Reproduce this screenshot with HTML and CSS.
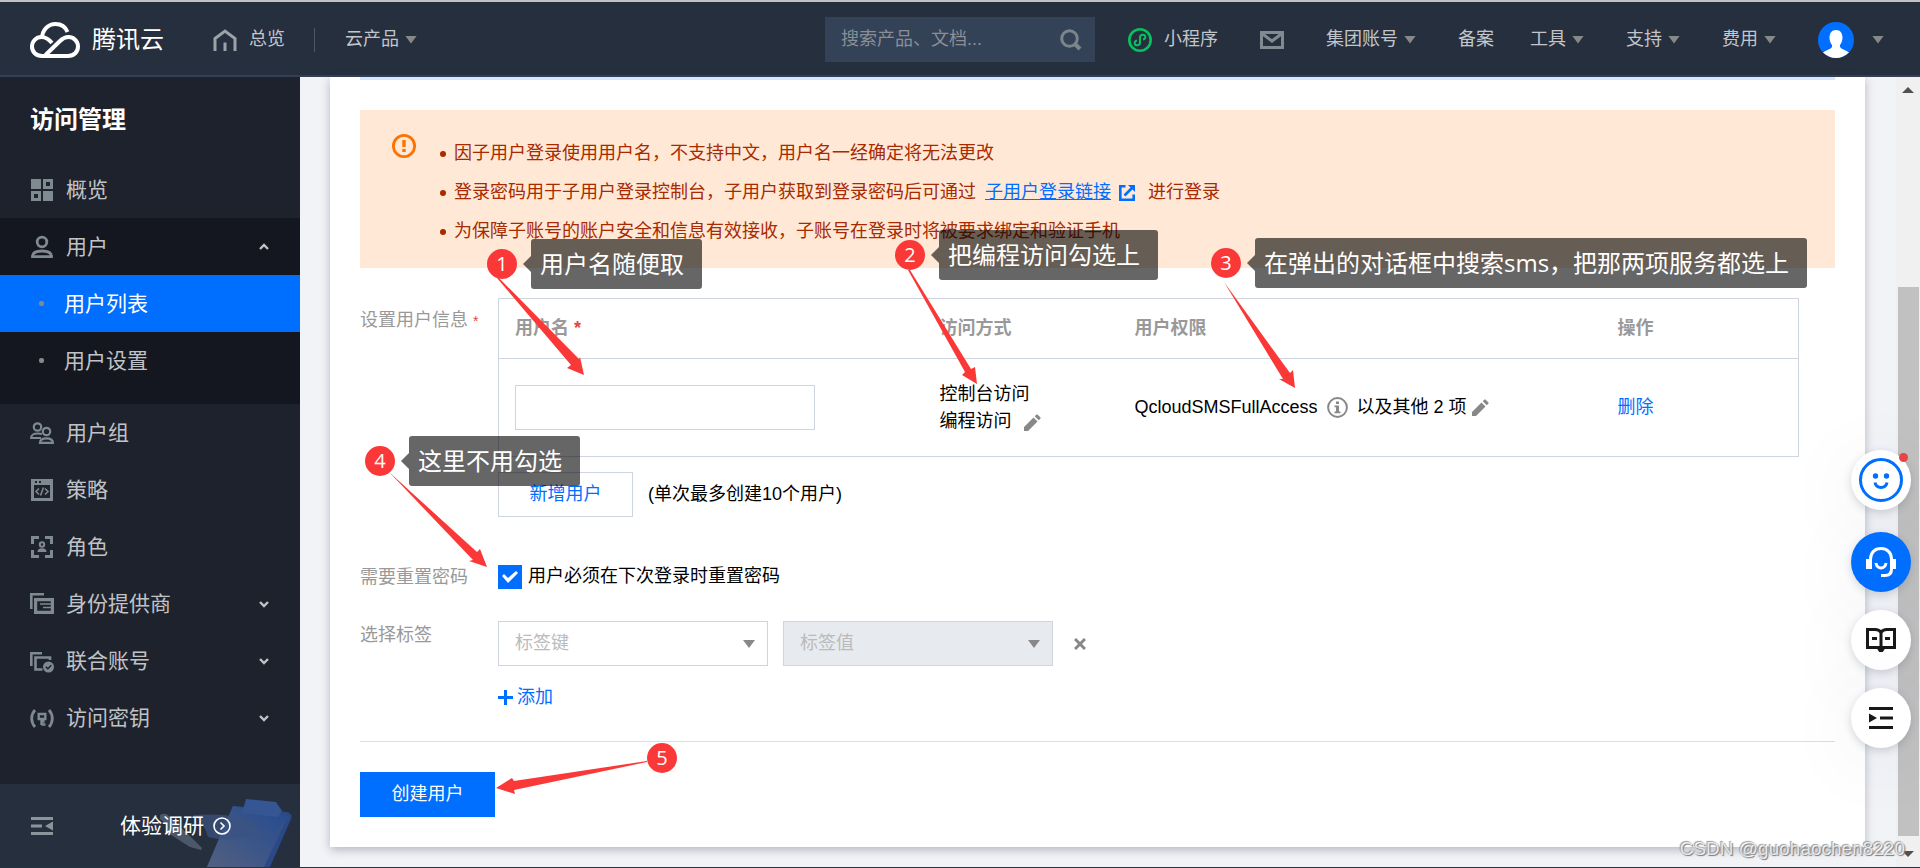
FILE: index.html
```html
<!DOCTYPE html>
<html lang="zh-CN">
<head>
<meta charset="utf-8">
<title>访问管理 - 腾讯云</title>
<link rel="stylesheet" href="styles.css">
</head>
<body>
<header class="topbar">
  <a class="brand" href="#">
    <svg width="50" height="36" viewBox="0 0 50 36" fill="none" stroke="#fff" stroke-width="4"><path d="M12 16.500C12 8 18 2 25.500 2C31 2 35.500 5 37.500 10"/><path d="M22 21C19 17.500 15.500 15 11.500 15C6 15 2 19.500 2 24.500C2 30 6 34 12 34H38C44 34 48 30 48 24.500C48 19 43.500 15 38.500 15C35 15 32.500 16.500 30 19L15.500 33"/></svg>
    <span>腾讯云</span>
  </a>
  <a class="navlink home" href="#">
    <svg width="24" height="22" viewBox="0 0 24 22" fill="none" stroke="#9aa3a8" stroke-width="3"><path d="M2 22V9.500L12 2L22 9.500V22M12 13.500V22"/></svg>
    <span>总览</span>
  </a>
  <span class="split"></span>
  <a class="navlink" href="#">云产品<i class="tri"></i></a>
  <form class="search">
    <input type="text" placeholder="搜索产品、文档..." aria-label="搜索">
    <button type="button" aria-label="搜索"><svg width="22" height="22" viewBox="0 0 22 22" fill="none" stroke="#7b868c" stroke-width="3"><circle cx="9.500" cy="9.500" r="7.800"/><path d="M15 15L20 20" stroke-width="4"/></svg></button>
  </form>
  <nav class="rightnav">
    <a class="navlink mini" href="#">
      <svg width="24" height="24" viewBox="0 0 24 24" fill="none" stroke="#07c160"><circle cx="12" cy="12" r="10.700" stroke-width="2.600"/><path d="M9 12.500C5.800 13 6 17.300 9.200 17.300C11 17.300 12 16 12 14.500V9.500C12 8 13 6.700 14.800 6.700C18 6.700 18.200 11 15 11.500" stroke-width="2"/></svg>
      <span>小程序</span>
    </a>
    <a class="navlink" href="#" aria-label="消息"><svg width="24" height="18" viewBox="0 0 24 18" fill="none" stroke="#7f8b91" stroke-width="3"><path d="M1.500 1.500H22.500V16.500H1.500ZM2 2.500L12 10L22 2.500"/></svg></a>
    <a class="navlink" href="#">集团账号<i class="tri"></i></a>
    <a class="navlink beian" href="#">备案</a>
    <a class="navlink" href="#">工具<i class="tri"></i></a>
    <a class="navlink" href="#">支持<i class="tri"></i></a>
    <a class="navlink" href="#">费用<i class="tri"></i></a>
    <a class="navlink avatar" href="#" aria-label="账号">
      <svg width="36" height="36" viewBox="0 0 36 36"><circle cx="18" cy="18" r="18" fill="#006eff"/><path d="M18 8C22.500 8 24.500 11.500 24.500 15.500C24.500 19 23.500 21 22 23C21.500 25.500 22.500 26 25 27.200C28 28.600 29.500 29.500 31 30.500C27.500 34 23 36 18 36C13 36 8.500 34 5 30.500C6.500 29.500 8 28.600 11 27.200C13.500 26 14.500 25.500 14 23C12.500 21 11.500 19 11.500 15.500C11.500 11.500 13.500 8 18 8Z" fill="#fff"/></svg>
      <i class="tri"></i>
    </a>
  </nav>
</header>

<div class="shell">
  <aside class="sidebar">
    <h2 class="side-title">访问管理</h2>
    <nav class="menu">
      <a class="item" href="#"><svg class="ico" viewBox="0 0 24 24" fill="#7f8990"><path fill-rule="evenodd" d="M1 1H11V11H1ZM13 1H23V11H13ZM16 4V8H20V4ZM1 13H11V23H1ZM4 16V20H8V16ZM13 13H23V23H13Z"/></svg><span>概览</span></a>
      <div class="group">
        <a class="item" href="#"><svg class="ico" viewBox="0 0 24 24" fill="none" stroke="#7f8990" stroke-width="2.800"><circle cx="12" cy="7" r="4.800"/><path d="M2.500 21.600C2.500 17.500 6 16 12 16C18 16 21.500 17.500 21.500 21.600Z"/></svg><span>用户</span><svg class="chev" viewBox="0 0 10 6"><path d="M1 5L5 1L9 5"/></svg></a>
        <a class="item sub active" href="#"><i class="dot"></i><span>用户列表</span></a>
        <a class="item sub" href="#"><i class="dot"></i><span>用户设置</span></a>
      </div>
      <a class="item" href="#"><svg class="ico" viewBox="0 0 24 24" fill="none" stroke="#7f8990" stroke-width="2.200"><circle cx="7.500" cy="6" r="3.700"/><path d="M11 17H1.200C1.200 13.500 3 12.500 8 12.500C10 12.500 11 12.700 12 13"/><circle cx="16.500" cy="10.500" r="3.700"/><path d="M10 21.900C10 18.500 12 17.300 16.500 17.300C21 17.300 22.900 18.500 22.900 21.900Z"/></svg><span>用户组</span></a>
      <a class="item" href="#"><svg class="ico" viewBox="0 0 24 24"><path fill="#7f8990" fill-rule="evenodd" d="M1 1H23V23H1ZM4 7V20H20V7ZM5 3V5H7V3ZM9 3V5H11V3Z"/><path d="M9 10.500L6 13.500L9 16.500M15 10.500L18 13.500L15 16.500M13.500 9.500L10.500 17.500" fill="none" stroke="#7f8990" stroke-width="1.600"/></svg><span>策略</span></a>
      <a class="item" href="#"><svg class="ico" viewBox="0 0 24 24" fill="none" stroke="#7f8990"><path stroke-width="3" d="M9 2.500H2.500V9M15 2.500H21.500V9M9 21.500H2.500V15M15 21.500H21.500V15"/><circle cx="12" cy="9.500" r="2.200" stroke-width="2"/><path fill="#7f8990" stroke="none" d="M7.500 17C7.500 14.500 9 13.300 12 13.300C15 13.300 16.500 14.500 16.500 17Z"/></svg><span>角色</span></a>
      <a class="item" href="#"><svg class="ico" viewBox="0 0 24 24" fill="none" stroke="#7f8990"><path stroke-width="2.600" d="M1.300 17V2.300H14"/><path stroke-width="3.200" d="M5.600 7.600H22.400V20.400H5.600Z"/><path stroke-width="1.600" d="M10 12H21M13 15.500H21"/></svg><span>身份提供商</span><svg class="chev" viewBox="0 0 10 6"><path d="M1 1L5 5L9 1"/></svg></a>
      <a class="item" href="#"><svg class="ico" viewBox="0 0 24 24" fill="none" stroke="#7f8990" stroke-width="2.600"><path d="M1.300 17V4.300H12"/><path d="M12.500 20.500H5.500V8.500H20V11"/><circle cx="18.500" cy="18" r="5.500" fill="#7f8990" stroke="none"/><path d="M15.800 17.800L17.800 19.800L21.300 16.300" stroke="#1e222d" stroke-width="1.500"/></svg><span>联合账号</span><svg class="chev" viewBox="0 0 10 6"><path d="M1 1L5 5L9 1"/></svg></a>
      <a class="item" href="#"><svg class="ico" viewBox="0 0 24 24" fill="none" stroke="#7f8990" stroke-width="2.800"><path d="M5 4C.6 9 .6 16 5 21M19 4C23.400 9 23.400 16 19 21"/><path d="M8.700 8H15.300V13H8.700ZM11.500 13V19M11.500 18.500H15.500M11.500 15.500H14.500" stroke-width="2.400"/></svg><span>访问密钥</span><svg class="chev" viewBox="0 0 10 6"><path d="M1 1L5 5L9 1"/></svg></a>
    </nav>
    <div class="side-foot">
      <svg class="art" width="133" height="69" viewBox="0 0 133 69">
        <defs><linearGradient id="clip" x1="0" y1="1" x2="1" y2="0"><stop offset="0" stop-color="#52607f"/><stop offset="1" stop-color="#244a92"/></linearGradient></defs>
        <path d="M47 69L73 8L87 9L127 14Q133 16 131 21L110 69Z" fill="#2a4986"/>
        <path d="M47 69L73 8L128 18L104 69Z" fill="url(#clip)"/>
        <path d="M33 17Q60 15 88 20Q97 27 99 36Q108 45 117 34L126 20Q120 40 106 42Q95 40 88 39Q68 44 48 39Q44 24 33 17Z" fill="#3b5380" opacity=".75"/>
        <path d="M86 1L116 4L122 13L118 19L82 15Z" fill="#365693"/>
        <path d="M0 17Q5 14 9 18L34 42L42 50L41 52L30 49L8 35Q8 26 0 21Z" fill="#566274" opacity=".8"/>
      </svg>
      <button class="fold" type="button" aria-label="收起菜单"><svg width="22" height="18" viewBox="0 0 22 18" fill="#8b949a"><path d="M0 0H22V3H0ZM0 7.500H11V10.500H0ZM0 15H22V18H0ZM22 4.500V13.500L14 9Z"/></svg></button>
      <a class="survey" href="#">体验调研<svg width="18" height="18" viewBox="0 0 18 18" fill="none" stroke="#fff" stroke-width="1.600"><circle cx="9" cy="9" r="8"/><path d="M7.500 5.500L11 9L7.500 12.500"/></svg></a>
    </div>
  </aside>

  <main class="main">
    <section class="card">
      <div class="strip"></div>
      <div class="alert">
        <svg width="24" height="24" viewBox="0 0 24 24"><circle cx="12" cy="12" r="10.600" fill="none" stroke="#ff7200" stroke-width="2.800"/><path fill="#ff7200" d="M10.300 6H13.700V13H10.300ZM10.300 15H13.700V18H10.300Z"/></svg>
        <ul>
          <li>因子用户登录使用用户名，不支持中文，用户名一经确定将无法更改</li>
          <li>登录密码用于子用户登录控制台，子用户获取到登录密码后可通过 <a href="#"><span>子用户登录链接</span><svg width="16" height="16" viewBox="0 0 16 16" fill="none" stroke="#006eff" stroke-width="2.600"><path d="M6.500 1.300H1.300V14.700H14.700V9.500M5.500 10.500L13 3"/><path d="M9 0H16V7Z" fill="#006eff" stroke="none"/></svg></a> 进行登录</li>
          <li>为保障子账号的账户安全和信息有效接收，子账号在登录时将被要求绑定和验证手机</li>
        </ul>
      </div>

      <div class="form">
        <div class="label first">设置用户信息<em>*</em></div>
        <div class="field">
          <table class="users">
            <colgroup><col class="c1"><col class="c2"><col class="c3"><col class="c4"></colgroup>
            <thead><tr><th>用户名 <em>*</em></th><th>访问方式</th><th>用户权限</th><th>操作</th></tr></thead>
            <tbody><tr>
              <td><input class="text" type="text" aria-label="用户名"></td>
              <td>控制台访问<br>编程访问 <svg class="pen" width="18" height="18" viewBox="0 0 18 18" fill="#888"><path d="M1 17V13L10.500 3.500L14.500 7.500L5 17ZM11.700 2.300L13.300 .7Q14 0 14.700 .7L17.300 3.300Q18 4 17.300 4.700L15.700 6.300Z"/></svg></td>
              <td><div class="perm"><span>QcloudSMSFullAccess</span><svg width="21" height="21" viewBox="0 0 21 21"><circle cx="10.500" cy="10.500" r="9.400" fill="none" stroke="#888" stroke-width="2"/><path fill="#888" d="M9 4.500H12V7H9ZM7.500 8.500H12V14.500H13.500V16.300H7.500V14.500H9V10.300H7.500Z"/></svg><span>以及其他 2 项</span><svg class="pen2" width="18" height="18" viewBox="0 0 18 18" fill="#888"><path d="M1 17V13L10.500 3.500L14.500 7.500L5 17ZM11.700 2.300L13.300 .7Q14 0 14.700 .7L17.300 3.300Q18 4 17.300 4.700L15.700 6.300Z"/></svg></div></td>
              <td><a class="link" href="#">删除</a></td>
            </tr></tbody>
          </table>
          <div class="addrow"><button class="btn" type="button">新增用户</button><span>(单次最多创建10个用户)</span></div>
        </div>

        <div class="label">需要重置密码</div>
        <label class="field check"><input type="checkbox" checked><span>用户必须在下次登录时重置密码</span></label>

        <div class="label">选择标签</div>
        <div class="field tags">
          <div class="tagrow">
            <div class="pick"><select aria-label="标签键"><option>标签键</option></select></div>
            <div class="pick off"><select aria-label="标签值" disabled><option>标签值</option></select></div>
            <button class="del" type="button" aria-label="移除"><svg width="12" height="12" viewBox="0 0 12 12" fill="none" stroke="#888" stroke-width="3"><path d="M1 1L11 11M11 1L1 11"/></svg></button>
          </div>
          <button class="add" type="button"><svg width="15" height="15" viewBox="0 0 15 15" fill="#006eff"><path d="M6 0H9V6H15V9H9V15H6V9H0V6H6Z"/></svg>添加</button>
        </div>
      </div>

      <div class="actions"><button class="btn primary" type="button">创建用户</button></div>
    </section>
  </main>
</div>

<svg class="arrows" width="1400" height="868" viewBox="0 0 1400 868" fill="#fb3838">
  <path d="M497 278L499 278L579 359L580 357L584 375L567 368L571 365Z"/>
  <path d="M908 270L910 270L971 369L975 367L977 384L962 375L965 372Z"/>
  <path d="M1224 282L1283 379L1279 379L1295 388L1293 370L1290 373Z"/>
  <path d="M389 472L473 560L469 561L487 567L480 549L477 552Z"/>
  <path d="M647 761L514 781L512 778L496 788L515 794L514 790L647 762Z"/>
</svg>
<div class="note n1"><b>1</b><p>用户名随便取</p></div>
<div class="note n2"><b>2</b><p>把编程访问勾选上</p></div>
<div class="note n3"><b>3</b><p>在弹出的对话框中搜索sms，把那两项服务都选上</p></div>
<div class="note n4"><b>4</b><p>这里不用勾选</p></div>
<div class="note n5"><b>5</b></div>

<div class="scrollbar"><i class="up"></i><div class="thumb"></div><i class="down"></i></div>

<div class="floats">
  <button class="fab face" type="button" aria-label="反馈"><svg width="44" height="44" viewBox="0 0 44 44" fill="none" stroke="#006eff"><circle cx="22" cy="22" r="20.500" stroke-width="3"/><path d="M16 24.500C17 31 27 31 28 24.500" stroke-width="3"/><circle cx="16.500" cy="18" r="2.700" fill="#006eff" stroke="none"/><circle cx="27.500" cy="18" r="2.700" fill="#006eff" stroke="none"/></svg><i class="badge"></i></button>
  <button class="fab blue" type="button" aria-label="客服"><svg width="30" height="30" viewBox="0 0 30 30" fill="none" stroke="#fff" stroke-width="3"><path d="M4.500 22V12C4.500 5.500 9 1.500 15 1.500C21 1.500 25.500 5.500 25.500 12V22C25.500 26.500 23 28.500 19 28.500H15M10 16C10.500 22.500 19.500 22.500 20 16"/><path d="M0 12H6V22H0ZM24 12H30V22H24Z" fill="#fff" stroke="none"/></svg></button>
  <button class="fab" type="button" aria-label="文档"><svg width="30" height="24" viewBox="0 0 30 24" fill="none" stroke="#181818" stroke-width="3"><path d="M15 4.500C13.500 2 11.500 1.500 9 1.500H1.500V19.500H28.500V1.500H21C18.500 1.500 16.500 2 15 4.500V23"/><path d="M12 19.500L15 24L18 19.500M6 10.500H11M19 10.500H24"/></svg></button>
  <button class="fab" type="button" aria-label="目录"><svg width="24" height="22" viewBox="0 0 24 22" fill="#181818"><path d="M0 0H24V3H0ZM11 9.500H24V12.500H11ZM0 19H24V22H0ZM0 6.500L8 11L0 15.500Z"/></svg></button>
</div>
<div class="credit">CSDN @guohaochen8220</div>
</body>
</html>
```
FILE: styles.css
```css
* { box-sizing: border-box; }
body {
  margin: 0;
  min-height: 100vh;
  display: flex;
  flex-direction: column;
  position: relative;
  background: #f2f3f7;
  border-bottom: 1px solid #263240;
  font: 18px/27px "Liberation Sans", "Noto Sans CJK SC", sans-serif;
  color: #000;
}
a { color: inherit; text-decoration: none; }
button, input, select { font: inherit; margin: 0; }
button { padding: 0; border: 0; background: none; cursor: pointer; }
svg { flex: none; display: block; }
em { font-style: normal; color: #e54545; }

.topbar {
  height: 77px;
  display: flex;
  align-items: center;
  padding: 2px 36px 0 30px;
  background: #262f3e;
  border-top: 2px solid #c2c3c5;
  border-bottom: 2px solid #343f57;
  color: #c2c6cb;
  white-space: nowrap;
}
.brand { display: flex; align-items: center; gap: 12px; color: #fff; font-size: 24px; }
.navlink { display: flex; align-items: center; gap: 6px; }
.home { margin-left: 49px; gap: 12px; }
.split { width: 1px; height: 24px; margin: 0 30px 0 29px; background: #4e5663; }
.tri { width: 12px; height: 8px; background: #888; clip-path: polygon(0 0, 100% 0, 50% 100%); }
.search { margin-left: auto; width: 270px; height: 45px; display: flex; align-items: center; padding: 0 13px 0 16px; background: #344258; }
.search input { flex: 1; min-width: 0; border: 0; padding: 0; background: none; outline: 0; color: #fff; }
.search input::placeholder { color: #8b8f95; opacity: 1; }
.rightnav { display: flex; align-items: center; gap: 42px; margin-left: 33px; }
.mini { gap: 12px; }
.beian { margin-right: -6px; }
.avatar { gap: 18px; }

.shell { flex: 1; display: flex; }
.sidebar { width: 300px; flex: none; display: flex; flex-direction: column; background: #1e222d; color: #c0c3c6; font-size: 21px; }
.side-title { margin: 0; padding: 26px 30px 25px; font-size: 24px; line-height: 33px; color: #fff; }
.item { height: 57px; display: flex; align-items: center; gap: 12px; padding: 0 31px 0 30px; }
.item span { flex: 1; }
.ico { width: 24px; height: 24px; }
.chev { width: 10px; height: 6px; overflow: visible; fill: none; stroke: #c0c3c6; stroke-width: 2.4; }
.group { padding-bottom: 15px; background: #151720; }
.sub { padding-left: 39px; gap: 20px; }
.dot { width: 5px; height: 5px; border-radius: 2px; background: #888; }
.active { background: #006eff; color: #fff; }
.side-foot { position: relative; margin-top: auto; height: 83px; display: flex; align-items: center; padding-left: 31px; background: #262f3e; }
.art { position: absolute; right: 7px; bottom: 0; }
.survey { position: relative; display: flex; align-items: center; gap: 9px; margin-left: 67px; color: #fff; }

.main { flex: 1; min-width: 0; padding: 0 55px 20px 30px; }
.card { padding: 0 30px 30px; background: #fff; box-shadow: 0 3px 9px rgba(54, 58, 80, .32); }
.strip { height: 3px; background: #d5e7ff; }
.alert { display: flex; gap: 24px; margin-top: 30px; padding: 24px 32px 17px; background: #ffe8d5; color: #a82a00; }
.alert ul { margin: 0; padding: 0; list-style: none; line-height: 39px; }
.alert li { display: flex; align-items: center; gap: 8px; }
.alert li::before { content: ""; width: 6px; height: 6px; border-radius: 50%; background: #a82a00; }
.alert li a { display: flex; align-items: center; gap: 8px; color: #006eff; margin: 0 5px 0 1px; }
.alert li a span { text-decoration: underline; }

.form { display: grid; grid-template-columns: 138px 1fr; padding: 30px 36px 30px 0; }
.label { padding-top: 1px; color: #999; }
.label.first { padding-top: 9px; }
.label em { font-size: 14px; margin-left: 5px; }
.users { width: 100%; table-layout: fixed; border-collapse: collapse; border: 1px solid #cfd5de; }
.c1 { width: 425px; }
.c2 { width: 195px; }
.c4 { width: 197px; }
.users th { height: 60px; padding: 0 16px; text-align: left; color: #999; border-bottom: 1px solid #cfd5de; }
.users td { height: 98px; padding: 0 16px; }
.text { display: block; width: 300px; height: 45px; padding: 0 10px; border: 1px solid #cfd5de; background: #fff; }
.pen { display: inline-block; vertical-align: -5px; margin-left: 6px; }
.perm { display: flex; align-items: center; white-space: nowrap; gap: 9px; }
.pen2 { margin-left: -5px; }
.link { color: #006eff; }
.addrow { display: flex; align-items: center; gap: 15px; margin: 15px 0 46px; }
.btn { width: 135px; height: 45px; border: 1px solid #cfd5de; background: #fff; color: #006eff; }
.primary { background: #006eff; border-color: #006eff; color: #fff; }
.check { display: flex; align-items: center; gap: 6px; height: 27px; margin-bottom: 31px; }
.check input {
  appearance: none;
  width: 24px;
  height: 24px;
  background: #006eff;
  display: grid;
  place-items: center;
}
.check input::before { content: ""; width: 18px; height: 13px; background: #fff; clip-path: polygon(1px 6px, 3px 4px, 7px 8px, 15px 1px, 17px 3px, 7px 13px); }
.tagrow { display: flex; align-items: center; gap: 15px; }
.pick { position: relative; width: 270px; }
.pick::after { content: ""; position: absolute; right: 13px; top: 19px; width: 12px; height: 8px; background: #888; clip-path: polygon(0 0, 100% 0, 50% 100%); }
.pick select { appearance: none; display: block; width: 100%; height: 45px; padding: 0 16px; border: 1px solid #cfd5de; border-radius: 0; background: #fff; color: #bbb; opacity: 1; }
.pick.off select { background: #e7eaef; }
.del { margin-left: 6px; }
.add { display: flex; align-items: center; gap: 4px; margin-top: 18px; color: #006eff; }
.actions { padding-top: 30px; border-top: 1px solid #dcdde0; }

.arrows { position: absolute; left: 0; top: 0; pointer-events: none; }
.note { position: absolute; display: flex; align-items: center; gap: 14px; height: 50px; font-family: "Open Sans", "Noto Sans CJK SC", sans-serif; color: #fff; white-space: nowrap; }
.note b { width: 30px; height: 30px; border-radius: 50%; background: #fb3838; text-align: center; font-size: 20px; font-weight: 400; line-height: 29px; }
.note p { position: relative; margin: 0; padding: 0 18px 0 9px; border-radius: 3px; background: rgba(0, 0, 0, .6); font-size: 24px; line-height: 50px; }
.note p::before { content: ""; position: absolute; left: -8px; top: 17px; border: solid transparent; border-width: 8px 8px 8px 0; border-right-color: rgba(0, 0, 0, .6); }
.n1 { left: 487px; top: 239px; }
.n2 { left: 895px; top: 230px; }
.n3 { left: 1211px; top: 238px; }
.n4 { left: 365px; top: 436px; }
.n5 { left: 647px; top: 733px; }

.scrollbar { position: absolute; top: 77px; right: 0; bottom: 0; width: 24px; padding: 10px 2px; display: flex; flex-direction: column; align-items: center; background: #f0f0f0; }
.up, .down { width: 12px; height: 6px; background: #505050; clip-path: polygon(0 100%, 50% 0, 100% 100%); }
.down { clip-path: polygon(0 0, 50% 100%, 100% 0); }
.thumb { flex: 1; width: 21px; margin: 194px 0 15px; background: #c1c1c1; }
.floats { position: absolute; right: 9px; top: 450px; display: flex; flex-direction: column; gap: 18px; }
.fab { position: relative; width: 60px; height: 60px; display: flex; align-items: center; justify-content: center; border-radius: 50%; background: #fff; box-shadow: 0 3px 9px rgba(54, 58, 80, .2), 0 12px 80px rgba(54, 70, 100, .08); }
.face { margin-bottom: 4px; }
.blue { background: #006eff; }
.badge { position: absolute; top: 3px; right: 3px; width: 9px; height: 9px; border-radius: 50%; background: #e54545; }
.credit { position: absolute; right: 15px; bottom: 5px; font-size: 19px; color: rgba(255, 255, 255, .75); text-shadow: -1px -1px 1px #999, 1px 1px 1px #777; }
```
